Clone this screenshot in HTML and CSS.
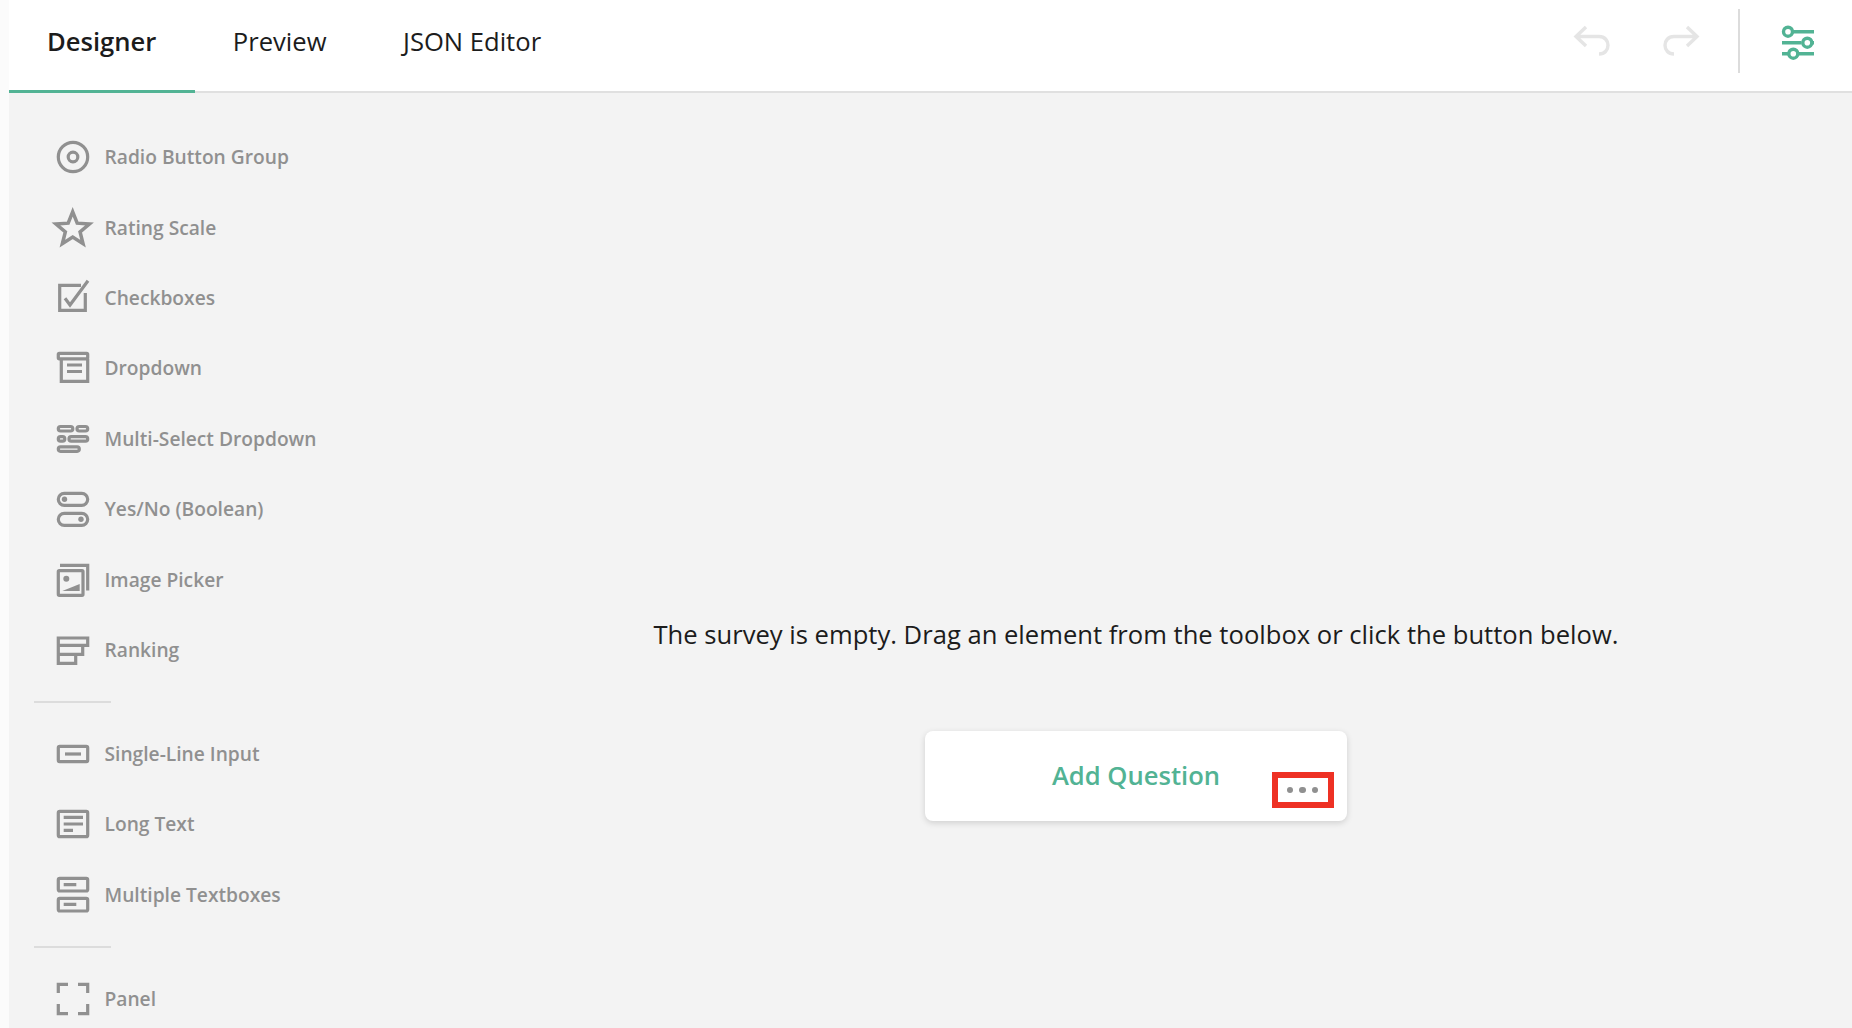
FILE: index.html
```html
<!DOCTYPE html>
<html lang="en">
<head>
<meta charset="utf-8">
<title>Survey Creator</title>
<link rel="stylesheet" href="styles.css">
</head>
<body>
<div class="strip"></div>
<div class="app">
  <header class="topbar">
    <nav class="tabs">
      <a class="tab tab-active">Designer</a>
      <a class="tab">Preview</a>
      <a class="tab">JSON Editor</a>
    </nav>
    <div class="actions">
      <svg class="undo" viewBox="0 0 36 36" width="36" height="36"><path d="M11 1 1 10.500 11 20M1 10.500H24C36 10.500 36 28 24 28H25"/></svg>
      <svg class="redo" viewBox="0 0 36 36" width="36" height="36"><path d="M25 1 35 10.500 25 20M35 10.500H12C0 10.500 0 28 12 28H11"/></svg>
      <span class="vsep"></span>
      <svg class="settings" viewBox="0 0 32 36" width="32" height="36"><path d="M11 3.700H32M0 14.700H19.500M0 25.700H6M16 25.700H32M29.500 14.700H32"/><circle cx="6" cy="3.700" r="4.500"/><circle cx="25.300" cy="14.700" r="4.500"/><circle cx="11.300" cy="25.700" r="4.500"/></svg>
    </div>
  </header>
  <div class="workspace">
    <aside class="toolbox">
      <div class="tool"><svg class="ico" viewBox="0 0 32 32"><circle cx="16" cy="16" r="14.700"/><circle cx="16" cy="16" r="4.800"/></svg><span>Radio Button Group</span></div>
      <div class="tool"><svg class="ico" viewBox="0 0 32 32"><path class="miter" transform="translate(15.700 17) scale(1.1) translate(-15.700 -17)" d="M15.700 1.400 19.800 11.700 30.900 12.500 22.400 19.600 25.100 30.400 15.700 24.400 6.300 30.400 9 19.600 .5 12.500 11.600 11.700Z"/></svg><span>Rating Scale</span></div>
      <div class="tool"><svg class="ico" viewBox="0 0 32 32"><path d="M24 3.300H2.700V28.300H28.300V11"/><path d="M8 16.300 13 23 31 -1.300"/></svg><span>Checkboxes</span></div>
      <div class="tool"><svg class="ico" viewBox="0 0 32 32"><rect x="1.300" y="1.300" width="29.400" height="5.500" rx="1"/><path d="M4.300 7V29.300H30.700V7M10 13H25M10 19.500H25"/></svg><span>Dropdown</span></div>
      <div class="tool"><svg class="ico" viewBox="0 0 32 32"><rect x="1.300" y="3.500" width="14.500" height="4.500" rx="2.200"/><rect x="20" y="3.500" width="10.700" height="4.500" rx="2.200"/><rect x="1.300" y="13.700" width="6.500" height="4.500" rx="2.200"/><rect x="12" y="13.700" width="18.700" height="4.500" rx="2.200"/><rect x="1.300" y="23.800" width="21" height="4.500" rx="2.200"/></svg><span>Multi-Select Dropdown</span></div>
      <div class="tool"><svg class="ico" viewBox="0 0 32 32"><rect x="1.300" y=".3" width="29.400" height="12" rx="6"/><rect x="1.300" y="20.300" width="29.400" height="12" rx="6"/><circle class="solid" cx="7.500" cy="6.300" r="2.700"/><circle class="solid" cx="24" cy="26.300" r="2.700"/></svg><span>Yes/No (Boolean)</span></div>
      <div class="tool"><svg class="ico" viewBox="0 0 32 32"><rect x="1.300" y="6.600" width="24.700" height="24.700" rx="1"/><path d="M3 1.300H30.700V26.500"/><circle class="solid" cx="9.300" cy="14.700" r="3"/><path class="solid" d="M5.300 27 22.700 20V27Z"/></svg><span>Image Picker</span></div>
      <div class="tool"><svg class="ico" viewBox="0 0 32 32"><path d="M1.300 4H30.700V11.300H1.300ZM1.300 11.300V29.300H18.700V20.300M1.300 20.300H25.700V11.300"/></svg><span>Ranking</span></div>
      <div class="divider"></div>
      <div class="tool"><svg class="ico" viewBox="0 0 32 32"><rect x="1.300" y="8.300" width="29.400" height="15.400" rx="1.500"/><path d="M8 16H24"/></svg><span>Single-Line Input</span></div>
      <div class="tool"><svg class="ico" viewBox="0 0 32 32"><rect x="1.300" y="3.300" width="29.400" height="25.400" rx="1.500"/><path d="M6.700 9.300H26M6.700 16H26M6.700 22.300H16"/></svg><span>Long Text</span></div>
      <div class="tool"><svg class="ico" viewBox="0 0 32 32"><rect x="1.300" y="-.7" width="29.400" height="12.700" rx="1.500"/><rect x="1.300" y="19.300" width="29.400" height="12.700" rx="1.500"/><path d="M6.700 5.700H19.300M6.700 25.300H19.300"/></svg><span>Multiple Textboxes</span></div>
      <div class="divider"></div>
      <div class="tool tool-last"><svg class="ico" viewBox="0 0 32 32"><path d="M1.300 10V1.300H11M21 1.300H30.700V10M30.700 21V30.700H21M11 30.700H1.300V21"/></svg><span>Panel</span></div>
    </aside>
    <main class="canvas">
      <p class="empty">The survey is empty. Drag an element from the toolbox or click the button below.</p>
      <div class="add">
        <span class="add-label">Add Question</span>
        <div class="more"><i></i><i></i><i></i></div>
      </div>
    </main>
  </div>
</div>
</body>
</html>
```
FILE: styles.css
```css
* { box-sizing: border-box; }
html, body { margin: 0; height: 100%; overflow: hidden; }
body { display: flex; background: #fbfbfb; font-family: "Open Sans", sans-serif; }
.strip { width: 9px; flex: none; }
.app { flex: 1; display: flex; flex-direction: column; min-width: 0; }
.topbar { height: 93px; flex: none; display: flex; align-items: stretch; justify-content: space-between; background: #fff; border-bottom: 2px solid #e0e0e0; }
.tabs { display: flex; }
.tab { display: flex; align-items: center; height: 93px; padding: 0 38.500px 11px 38px; font-size: 25.6px; color: #1c1c1c; }
.tab-active { font-weight: 600; padding-bottom: 8px; border-bottom: 3px solid #52b394; }
.actions { display: flex; align-items: center; padding-right: 38px; height: 91px; }
.actions svg { fill: none; stroke-width: 3.4; overflow: visible; }
.undo, .redo { stroke: #e5e5e5; margin-bottom: 3px; }
.redo { margin-left: 51.500px; }
.vsep { width: 2px; height: 64px; background: #dcdcdc; margin: 0 42px 10px 40px; }
.settings { stroke: #52b394; }
.workspace { flex: 1; display: flex; background: #f3f3f3; min-height: 0; }
.toolbox { width: 411px; flex: none; padding-top: 29px; }
.tool { height: 70.4px; display: flex; align-items: center; gap: 16px; padding-left: 47.500px; font-size: 19.2px; font-weight: 600; color: #909090; }
.tool span { margin-bottom: 1px; }
.tool-last { padding-top: 1px; }
.ico { width: 32px; height: 32px; flex: none; fill: none; stroke: #909090; stroke-width: 3.2; overflow: visible; }
.ico .solid { fill: #909090; stroke: none; }
.miter { stroke-miterlimit: 10; }
.divider { width: 77px; height: 2px; background: #dcdcdc; margin: 16px 0 15.500px 25px; }
.canvas { flex: 1; display: flex; flex-direction: column; align-items: center; padding-top: 524px; }
.empty { margin: 0; font-size: 25.6px; line-height: 36px; color: #1c1c1c; white-space: nowrap; }
.add { position: relative; width: 422px; height: 90px; margin-top: 78px; display: flex; align-items: center; justify-content: center; background: #fff; border-radius: 8px; box-shadow: 0 2px 6px rgba(0,0,0,.15); }
.add-label { font-size: 25.6px; font-weight: 600; color: #52b394; margin-bottom: 2px; }
.more { position: absolute; left: 347px; top: 41px; width: 62px; height: 36px; padding-right: 1px; display: flex; align-items: center; justify-content: center; gap: 6px; border: 6px solid #ee3124; }
.more i { width: 6.500px; height: 6.500px; border-radius: 50%; background: #909090; }
```
